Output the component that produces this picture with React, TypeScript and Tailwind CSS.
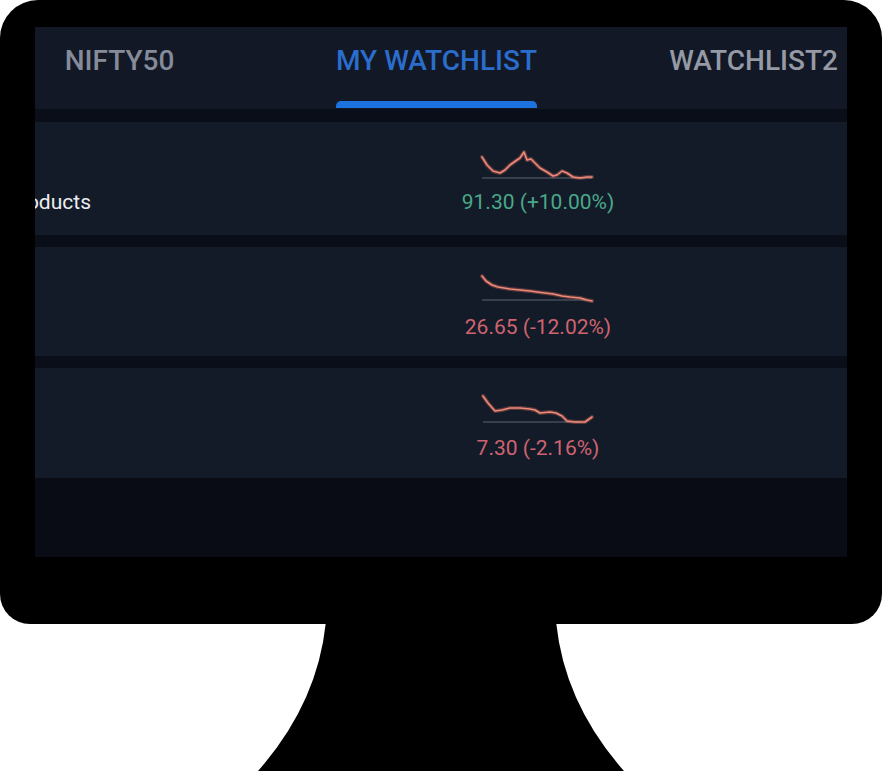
import React from "react";

type Row = {
  name?: string;
  rowH: string;
  svgTop: number;
  points: [number, number][];
  base: [number, number, number];
  price: string;
  up: boolean;
};

const rows: Row[] = [
  {
    name: "Products",
    rowH: "h-[113px]",
    svgTop: 147,
    points: [
      [482, 157], [487, 165], [493, 171], [500, 173], [505, 170], [510, 165],
      [517, 160], [520, 158], [524, 152], [527, 160], [531, 159], [535, 163],
      [540, 168], [547, 172], [553, 176], [557, 175], [562, 171], [567, 173],
      [573, 177], [580, 178], [587, 177], [592, 177],
    ],
    base: [482, 592, 178],
    price: "91.30 (+10.00%)",
    up: true,
  },
  {
    rowH: "h-[109px]",
    svgTop: 272,
    points: [
      [482, 276], [486, 281], [492, 285], [498, 287], [510, 289], [520, 290],
      [530, 291], [537, 292], [545, 293], [553, 294], [562, 296], [570, 297],
      [580, 298], [587, 300], [592, 301],
    ],
    base: [482, 587, 300],
    price: "26.65 (-12.02%)",
    up: false,
  },
  {
    rowH: "h-[110px]",
    svgTop: 393,
    points: [
      [483, 396], [488, 403], [495, 411], [502, 410], [510, 408], [520, 408],
      [530, 409], [535, 410], [540, 413], [550, 412], [556, 413], [562, 416],
      [567, 421], [575, 422], [585, 422], [592, 417],
    ],
    base: [483, 580, 422],
    price: "7.30 (-2.16%)",
    up: false,
  },
];

function Spark({ row }: { row: Row }) {
  const ox = 478;
  const d = row.points
    .map(([x, y], i) => `${i === 0 ? "M" : "L"}${x - ox},${y - row.svgTop}`)
    .join(" ");
  const [bx1, bx2, by] = row.base;
  return (
    <svg width="120" height="34" viewBox="0 0 120 34" className="block">
      <line
        x1={bx1 - ox}
        x2={bx2 - ox}
        y1={by - row.svgTop}
        y2={by - row.svgTop}
        stroke="#5d6472"
        strokeWidth="1.2"
      />
      <path d={d} fill="none" stroke="#e0705e" strokeOpacity="0.35" strokeWidth="4" strokeLinejoin="round" strokeLinecap="round" />
      <path d={d} fill="none" stroke="#f08a78" strokeWidth="1.6" strokeLinejoin="round" strokeLinecap="round" />
    </svg>
  );
}

export default function App() {
  const font = { fontFamily: "Roboto, 'Noto Sans', 'Liberation Sans', sans-serif" };
  return (
    <div className="w-[882px] h-[772px] bg-white flex flex-col" style={font}>
      <div className="w-[882px] h-[624px] bg-black rounded-t-[38px] rounded-b-[30px] pt-[27px] px-[35px] pb-[67px]">
        <div className="w-[812px] h-[530px] overflow-hidden flex flex-col bg-[#090c15]">
          {/* Tabs */}
          <div className="h-[82px] shrink-0 bg-[#121826] overflow-hidden">
            <div className="flex -ml-[74px]">
              {[
                { t: "NIFTY50", active: false, c: "text-[#858b98]" },
                { t: "MY WATCHLIST", active: true, c: "text-[#2a6dcc]" },
                { t: "WATCHLIST2", active: false, c: "text-[#959aa5]" },
              ].map((tab) => (
                <div key={tab.t} className="w-[317px] shrink-0 flex justify-center">
                  <div className="flex flex-col items-stretch pt-[20px]">
                    <span className={`text-[28px] leading-[28px] font-medium whitespace-nowrap ${tab.c}`}>
                      {tab.t}
                    </span>
                    {tab.active ? (
                      <div className="mt-[26px] h-[7px] rounded-t-[5px] bg-[#1c73e0]" />
                    ) : null}
                  </div>
                </div>
              ))}
            </div>
          </div>
          <div className="h-[13px] shrink-0 bg-[#0a0e18]" />
          {rows.map((row, i) => (
            <React.Fragment key={i}>
              <div className={`${row.rowH} shrink-0 bg-[#131a28] flex items-start`}>
                <div className="w-[56px] shrink-0 overflow-hidden flex justify-end pt-[68px]">
                  {row.name ? (
                    <span className="text-[21px] leading-[24px] text-[#eceef2] whitespace-nowrap">
                      {row.name}
                    </span>
                  ) : null}
                </div>
                <div className="ml-[357px] w-[180px] flex flex-col items-center pt-[25px]">
                  <Spark row={row} />
                  <span
                    className={`mt-[9px] text-[21px] leading-[24px] whitespace-nowrap ${
                      row.up ? "text-[#4aa88a]" : "text-[#cf6470]"
                    }`}
                  >
                    {row.price}
                  </span>
                </div>
              </div>
              {i < rows.length - 1 ? <div className="h-[12px] shrink-0 bg-[#0a0e18]" /> : null}
            </React.Fragment>
          ))}
          <div className="flex-1 bg-[#090c15]" />
        </div>
      </div>
      <svg width="882" height="148" viewBox="0 0 882 148" className="block -mt-px">
        <path d="M326,-2 L556,-2 Q564,80 624,148 L258,148 Q318,80 326,-2 Z" fill="#000" />
      </svg>
    </div>
  );
}
